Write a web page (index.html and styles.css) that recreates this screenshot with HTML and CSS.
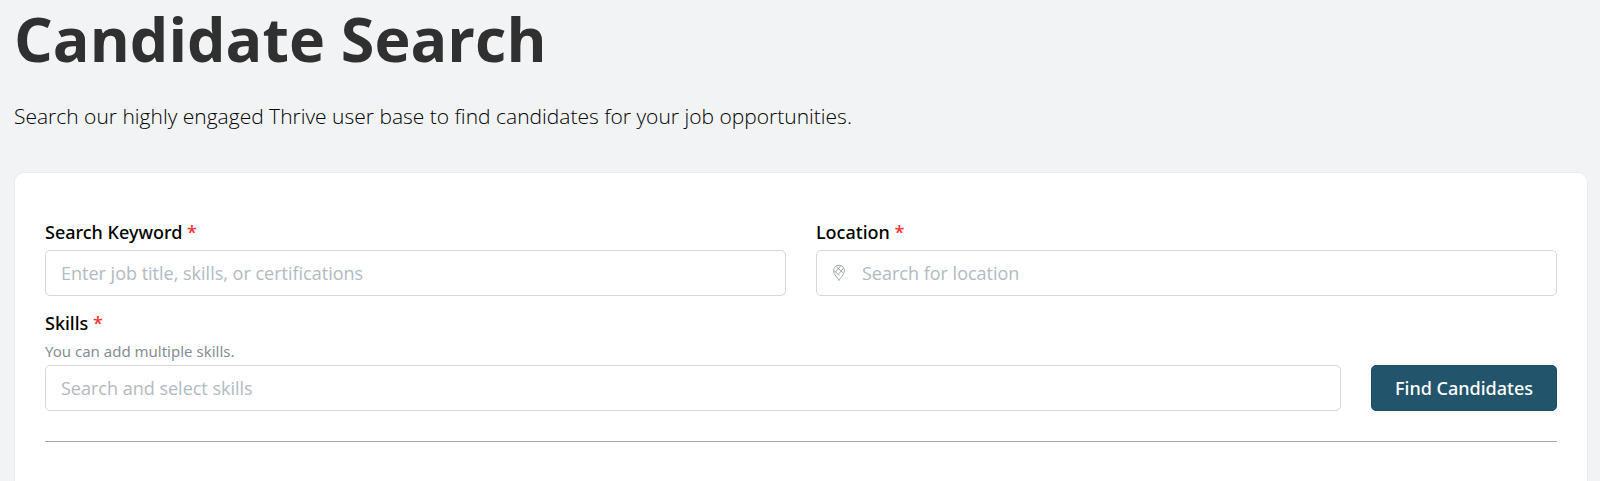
FILE: index.html
```html
<!DOCTYPE html>
<html lang="en">
<head>
<meta charset="utf-8">
<meta name="viewport" content="width=device-width, initial-scale=1">
<title>Candidate Search</title>
<link rel="stylesheet" href="styles.css">
</head>
<body>
<main class="page">
  <h1 class="title">Candidate Search</h1>
  <p class="intro">Search our highly engaged Thrive user base to find candidates for your job opportunities.</p>
  <section class="card">
    <form class="search">
      <div class="row">
        <div class="field">
          <label class="label" for="keyword">Search Keyword <span class="required">*</span></label>
          <input class="input" id="keyword" type="text" placeholder="Enter job title, skills, or certifications">
        </div>
        <div class="field">
          <label class="label" for="location">Location <span class="required">*</span></label>
          <div class="input-group">
            <svg class="pin" viewBox="0 0 14 18" aria-hidden="true">
              <path d="M7 16.500C6 14 1.500 10.500 1.500 6.700a5.500 5.500 0 0 1 11 0C12.500 10.500 8 14 7 16.500z"/>
              <path d="M2 6.500 7.500 11.500M4.500 3 11 8.800M8.800 1.800 3 8.500M11.500 4 6 11"/>
            </svg>
            <input class="bare-input" id="location" type="text" placeholder="Search for location">
          </div>
        </div>
      </div>
      <div class="row-action">
        <div class="field">
          <label class="label" for="skills">Skills <span class="required">*</span></label>
          <p class="hint" id="skills-hint">You can add multiple skills.</p>
          <input class="input" id="skills" type="text" placeholder="Search and select skills" aria-describedby="skills-hint">
        </div>
        <button class="button" type="submit">Find Candidates</button>
      </div>
    </form>
    <hr class="divider">
  </section>
</main>
</body>
</html>
```
FILE: styles.css
```css
* {
  box-sizing: border-box;
}

body {
  margin: 0;
  background: #f1f3f5;
  color: #000;
  font-family: "Noto Sans", "Open Sans", sans-serif;
}

.page {
  display: flex;
  flex-direction: column;
  min-height: 100vh;
  padding: 0 12px 0 14px;
}

.title,
.intro,
.input,
.bare-input {
  font-family: "Open Sans", "Noto Sans", sans-serif;
}

.title {
  margin: 0;
  color: #303030;
  font-size: 61px;
  font-weight: 700;
  line-height: 78px;
}

.intro {
  margin: 22px 0 40px;
  font-size: 21px;
  font-weight: 300;
  line-height: 32px;
}

.card {
  flex: 1;
  padding: 45px 30px 38px;
  background: #fff;
  border: 1px solid #e9ecef;
  border-bottom: 0;
  border-radius: 10px 10px 0 0;
}

.row {
  display: grid;
  grid-template-columns: 1fr 1fr;
  gap: 30px;
  margin-bottom: 13px;
}

.row-action {
  display: flex;
  align-items: flex-end;
  gap: 30px;
}

.field {
  display: flex;
  flex: 1;
  flex-direction: column;
}

.label {
  padding-bottom: 4px;
  font-size: 18px;
  font-weight: 500;
  line-height: 28px;
}

.required {
  color: #fa2c2c;
}

.hint {
  margin: 0;
  padding-bottom: 4px;
  color: #868e96;
  font-size: 15px;
  line-height: 20px;
}

.input,
.input-group {
  width: 100%;
  height: 46px;
  padding: 0 15px;
  background: #fff;
  border: 1px solid #d3d8dd;
  border-radius: 5px;
}

.input,
.bare-input {
  color: #000;
  font-size: 18px;
}

.input-group {
  display: flex;
  align-items: center;
  gap: 16px;
}

.bare-input {
  flex: 1;
  min-width: 0;
  padding: 0;
  background: none;
  border: 0;
}

.input::placeholder,
.bare-input::placeholder {
  color: #b2bac2;
  opacity: 1;
}

.pin {
  flex: none;
  width: 14px;
  height: 18px;
  fill: none;
  stroke: #a5adb6;
}

.button {
  height: 46px;
  padding: 0 23px;
  background: #22556c;
  border: 1px solid #194e67;
  border-radius: 5px;
  color: #fff;
  font-family: inherit;
  font-size: 18px;
  font-weight: 500;
}

.divider {
  margin: 30px 0 0;
  border: 0;
  border-top: 1px solid #a5a8ab;
}
```
